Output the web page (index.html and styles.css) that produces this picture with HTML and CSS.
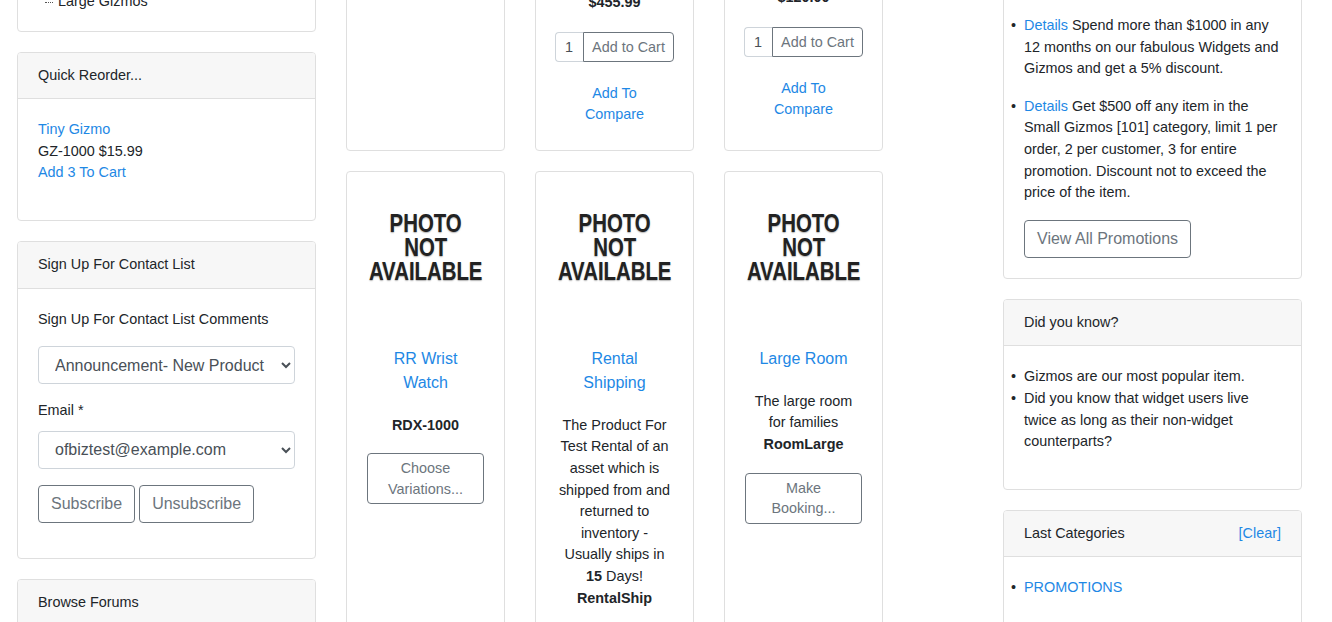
FILE: index.html
```html
<!DOCTYPE html>
<html lang="en">
<head>
<meta charset="utf-8">
<title>Catalog</title>
<link rel="stylesheet" href="styles.css">
</head>
<body>
<div class="page">
  <aside class="col">
    <div class="card card--cut-left">
      <div class="card-body card-body--tree">
        <ul class="tree">
          <li><span class="tree-dots"></span>Large Gizmos</li>
        </ul>
      </div>
    </div>

    <div class="card">
      <div class="card-header">Quick Reorder...</div>
      <div class="card-body">
        <div class="reorder">
          <a href="#">Tiny Gizmo</a><br>
          GZ-1000 $15.99<br>
          <a href="#">Add 3 To Cart</a>
        </div>
      </div>
    </div>

    <div class="card">
      <div class="card-header">Sign Up For Contact List</div>
      <div class="card-body">
        <form class="signup-form">
          <div class="field-title">Sign Up For Contact List Comments</div>
          <div class="form-group">
            <select class="form-select">
              <option>Announcement- New Product</option>
            </select>
          </div>
          <div class="field-label">Email *</div>
          <div class="form-group">
            <select class="form-select">
              <option>ofbiztest@example.com</option>
            </select>
          </div>
          <div class="actions">
            <button type="button" class="btn-outline">Subscribe</button>
            <button type="button" class="btn-outline">Unsubscribe</button>
          </div>
        </form>
      </div>
    </div>

    <div class="card">
      <div class="card-header">Browse Forums</div>
      <div class="card-body">
        <div class="reorder">&nbsp;</div>
      </div>
    </div>
  </aside>

  <main class="col">
    <div class="product-row product-row--cut">
      <div class="product"></div>
      <div class="product product--offset-a">
        <div class="price">$455.99</div>
        <div class="cart-group">
          <input class="qty" type="text" value="1">
          <button type="button" class="btn-cart">Add to Cart</button>
        </div>
        <a href="#" class="compare">Add To Compare</a>
      </div>
      <div class="product product--offset-b">
        <div class="price">$120.00</div>
        <div class="cart-group">
          <input class="qty" type="text" value="1">
          <button type="button" class="btn-cart">Add to Cart</button>
        </div>
        <a href="#" class="compare">Add To Compare</a>
      </div>
    </div>

    <div class="product-row">
      <div class="product product--full">
        <div class="photo"><div class="photo-text">PHOTO<br>NOT<br>AVAILABLE</div></div>
        <a href="#" class="product-name">RR Wrist Watch</a>
        <div class="sku">RDX-1000</div>
        <button type="button" class="btn-wide">Choose Variations...</button>
      </div>
      <div class="product product--full">
        <div class="photo"><div class="photo-text">PHOTO<br>NOT<br>AVAILABLE</div></div>
        <a href="#" class="product-name">Rental Shipping</a>
        <div class="desc">The Product For Test Rental of an asset which is shipped from and returned to inventory - Usually ships in <b>15</b> Days!</div>
        <div class="sku">RentalShip</div>
      </div>
      <div class="product product--full">
        <div class="photo"><div class="photo-text">PHOTO<br>NOT<br>AVAILABLE</div></div>
        <a href="#" class="product-name">Large Room</a>
        <div class="desc">The large room for families</div>
        <div class="sku">RoomLarge</div>
        <button type="button" class="btn-wide">Make Booking...</button>
      </div>
    </div>
  </main>

  <aside class="col">
    <div class="card card--cut-right">
      <div class="card-body">
        <ul class="promo-list">
          <li><a href="#">Details</a> Spend more than $1000 in any 12 months on our fabulous Widgets and Gizmos and get a 5% discount.</li>
          <li><a href="#">Details</a> Get $500 off any item in the Small Gizmos [101] category, limit 1 per order, 2 per customer, 3 for entire promotion. Discount not to exceed the price of the item.</li>
        </ul>
        <div class="actions">
          <button type="button" class="btn-outline">View All Promotions</button>
        </div>
      </div>
    </div>

    <div class="card">
      <div class="card-header">Did you know?</div>
      <div class="card-body">
        <ul class="plain-list">
          <li>Gizmos are our most popular item.</li>
          <li>Did you know that widget users live twice as long as their non-widget counterparts?</li>
        </ul>
      </div>
    </div>

    <div class="card">
      <div class="card-header card-header--split">
        <span>Last Categories</span>
        <a href="#">[Clear]</a>
      </div>
      <div class="card-body">
        <ul class="plain-list">
          <li><a href="#">PROMOTIONS</a></li>
        </ul>
      </div>
    </div>
  </aside>
</div>
</body>
</html>
```

FILE: styles.css
```css
* {
  box-sizing: border-box;
}

html,
body {
  margin: 0;
  overflow: hidden;
}

body {
  font-family: "Liberation Sans", Arial, Helvetica, sans-serif;
  font-size: 14.4px;
  line-height: 21.6px;
  color: #212529;
  background: #fff;
}

a {
  color: #1e88e5;
  text-decoration: none;
}

.page {
  display: grid;
  grid-template-columns: 299px 627px 299px;
  column-gap: 30px;
  padding-left: 17px;
  align-items: start;
}

/* cards */
.card {
  border: 1px solid #dfdfdf;
  border-radius: 4px;
  background: #fff;
  margin-bottom: 20px;
}

.card-header {
  padding: 12px 20px;
  background: #f7f7f7;
  border-bottom: 1px solid #dfdfdf;
  border-radius: 3px 3px 0 0;
}

.card-header--split {
  display: flex;
  justify-content: space-between;
}

.card-body {
  padding: 20px;
}

.card-body--tree {
  padding-bottom: 18px;
}

.card--cut-left {
  margin-top: -30px;
}

.card--cut-right {
  margin-top: -6px;
}

/* left column */
.tree {
  list-style: none;
  margin: 0;
  padding: 0 0 0 7px;
}

.tree-dots {
  display: inline-block;
  width: 8px;
  height: 0;
  border-top: 1px dotted #555;
  vertical-align: middle;
  margin-right: 5px;
}

.reorder {
  margin-bottom: 16px;
}

.signup-form {
  margin: 0 0 15px;
}

.field-title {
  margin-bottom: 16px;
}

.field-label {
  margin-bottom: 9px;
}

.form-group {
  margin-bottom: 16px;
}

.form-select {
  display: block;
  width: 100%;
  height: 38px;
  padding: 6px 12px;
  font-family: "Liberation Sans", Arial, sans-serif;
  font-size: 16px;
  color: #495057;
  background-color: #fff;
  border: 1px solid #ced4da;
  border-radius: 4px;
}

.actions {
  display: flex;
  gap: 4px;
}

.btn-outline {
  font-family: "Liberation Sans", Arial, sans-serif;
  font-size: 16px;
  line-height: 24px;
  padding: 6px 12px;
  border: 1px solid #6c757d;
  border-radius: 4px;
  color: #6c757d;
  background: transparent;
  white-space: nowrap;
}

/* products */
.product-row {
  display: flex;
  gap: 30px;
  margin-bottom: 20px;
}

.product-row--cut {
  margin-top: -39px;
}

.product {
  flex: none;
  width: 159px;
  border: 1px solid #dfdfdf;
  border-radius: 4px;
  padding: 0 21px 24px;
  display: flex;
  flex-direction: column;
  align-items: center;
  text-align: center;
}

.product--offset-a {
  padding-top: 30px;
}

.product--offset-b {
  padding-top: 25px;
}

.product--full {
  padding-top: 15px;
}

.price {
  font-weight: bold;
}

.cart-group {
  flex: none;
  display: flex;
  margin-top: 18px;
  white-space: nowrap;
}

.qty {
  flex: none;
  width: 28px;
  height: 30px;
  padding: 0 0 0 9px;
  font-family: "Liberation Sans", Arial, sans-serif;
  font-size: 14.4px;
  color: #495057;
  border: 1px solid #ced4da;
  border-right: 0;
  border-radius: 4px 0 0 4px;
}

.btn-cart {
  flex: none;
  height: 30px;
  padding: 0 8px;
  font-family: "Liberation Sans", Arial, sans-serif;
  font-size: 14.4px;
  line-height: 28px;
  color: #6c757d;
  background: #fff;
  border: 1px solid #6c757d;
  border-radius: 0 4px 4px 0;
  white-space: nowrap;
}

.compare {
  width: 100px;
  margin-top: 21px;
}

.photo {
  flex: none;
  width: 120px;
  height: 120px;
  display: flex;
  align-items: center;
  justify-content: center;
  margin-bottom: 40px;
}

.photo-text {
  font-family: "Liberation Sans", Arial, sans-serif;
  font-size: 25px;
  line-height: 24px;
  font-weight: bold;
  color: #222;
  white-space: nowrap;
  text-align: center;
  transform: scaleX(0.815);
  text-shadow: 0 1px 1.5px rgba(0, 0, 0, 0.3);
}

.product-name {
  display: block;
  max-width: 105px;
  font-size: 16px;
  line-height: 24px;
  margin-bottom: 20px;
}

.sku {
  font-weight: bold;
}

.btn-wide {
  width: 117px;
  margin-top: 17px;
  padding: 4px 8px;
  font-family: "Liberation Sans", Arial, sans-serif;
  font-size: 14.4px;
  line-height: 20.5px;
  color: #6c757d;
  background: #fff;
  border: 1px solid #6c757d;
  border-radius: 4px;
}

/* right column */
.promo-list,
.plain-list {
  padding: 0;
  list-style: disc outside;
}

.promo-list {
  margin: 0;
}

.plain-list {
  margin: 0 0 16px;
}

.promo-list li {
  margin-bottom: 16px;
}

.promo-list li::marker,
.plain-list li::marker {
  content: "\2022\00a0\00a0";
}
```
